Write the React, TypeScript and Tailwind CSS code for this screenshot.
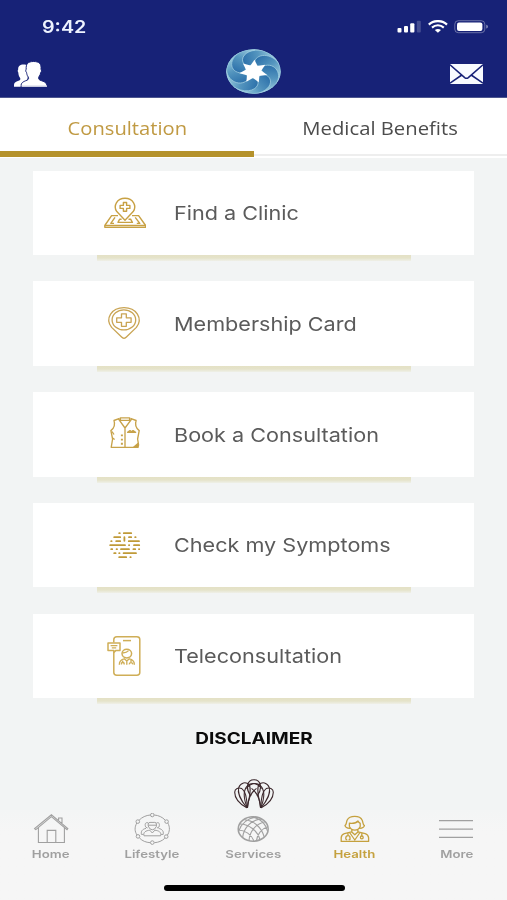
import { FC, ReactNode } from "react";

interface IconProps {
  className?: string;
}

const StatusIcons: FC = () => (
  <svg className="w-[92px] h-[14px]" viewBox="0 0 92 14" fill="none">
    <rect x="0.5" y="8" width="4" height="4.5" rx="1" fill="#fff" />
    <rect x="7" y="6" width="4" height="6.5" rx="1" fill="#fff" />
    <rect x="13.2" y="3.2" width="4.2" height="9.3" rx="1" fill="#fff" />
    <rect x="19.8" y="0.8" width="4" height="11.7" rx="1" fill="#fff" opacity="0.2" />
    <path d="M31.8 4.6C36.8 -.1 45 -.1 50 4.6" stroke="#fff" strokeWidth="2.2" />
    <path d="M35 7.6C38.4 4.5 43.4 4.5 46.8 7.6" stroke="#fff" strokeWidth="2.1" />
    <path d="M37.8 10C39.7 8.5 42.1 8.5 44 10L40.9 12.8Z" fill="#fff" />
    <rect x="57.8" y="0.7" width="30" height="12" rx="3.5" stroke="#fff" strokeOpacity="0.35" />
    <rect x="60" y="2.4" width="25.4" height="8.6" rx="2" fill="#fff" />
    <path d="M89.2 4.8c2.4.6 2.4 3.2 0 3.8z" fill="#fff" opacity="0.45" />
  </svg>
);

const PeopleIcon: FC = () => (
  <svg className="w-[33px] h-[26px]" viewBox="0 0 33 26" fill="#fff">
    <path d="M0 25C0 21.6 1.2 21.2 5.2 19.6C6.6 19 6.6 17.6 5.8 16.6C4.6 15 4.5 13 4.3 11.6C3.4 10.4 3.7 9.2 4.2 8.6C3.9 5 6.4 3.4 10 3.6C12.4 3.6 15 5 15 9L13 20L7 25Z" />
    <path
      d="M7 25.3C7.1 21.6 8.6 21 13 19.2C14.9 18.4 14.9 16.8 14 15.6C13 14.4 12.8 12.8 12.6 11.6C11.5 10.6 11.6 9 12.2 8.2C11.8 3 13.8.5 19.6.5C25.3.5 27.6 3 27 8.2C27.8 9.2 27.6 10.8 26.7 11.6C26.4 13 26 14.6 25 15.6C24.2 16.8 24.4 18.4 26.1 19.2C30.6 20.8 32.8 21.4 33 25.3Z"
      stroke="#172277"
      strokeWidth="1"
    />
    <path d="M0 24.4H6.6V25.7H0ZM7.6 24.4H33V25.7H7.6Z" />
  </svg>
);

const MailIcon: FC = () => (
  <svg className="w-[33px] h-5" viewBox="0 0 33 20">
    <rect width="33" height="20" rx="0.8" fill="#f8fbff" />
    <path d="M0 .8L14.7 13.6Q16.5 15 18.3 13.6L33 .8M0 19.2L11.8 11M33 19.2L21.2 11" fill="none" stroke="#172277" strokeWidth="1.6" />
  </svg>
);

const blades = [0, 1, 2, 3, 4, 5, 6];

const Logo: FC = () => (
  <svg className="w-[55px] h-[45px]" viewBox="-50 -50 100 100" preserveAspectRatio="none">
    <defs>
      <linearGradient id="blade" gradientUnits="userSpaceOnUse" x1="-22" y1="-22" x2="38" y2="-38">
        <stop offset="0" stopColor="#2c70aa" />
        <stop offset="0.5" stopColor="#5596bf" />
        <stop offset="1" stopColor="#a3d2e1" />
      </linearGradient>
      <clipPath id="disc">
        <circle r="49.5" />
      </clipPath>
    </defs>
    <g clipPath="url(#disc)">
      <circle r="49.5" fill="#5b9fc3" />
      {blades.map((i) => (
        <path
          key={i}
          transform={`rotate(${i * 51.43 + 4})`}
          d="M0 -18C0 -42 32 -45 47 -17L60 -40L16 -47.3C-15.2 -53.1 -32.8 -26.2 -14.1 -11.2Z"
          fill="url(#blade)"
        />
      ))}
      {blades.map((i) => (
        <path
          key={i}
          transform={`rotate(${i * 51.43 + 4})`}
          d="M0 -18C0 -42 32 -45 47 -17"
          fill="none"
          stroke="#a5d0e2"
          strokeWidth="1.4"
        />
      ))}
      <circle r="49" fill="none" stroke="#a5d0e2" strokeWidth="1.2" />
    </g>
    <circle r="14" fill="#fff" />
    {blades.map((i) => (
      <path key={i} transform={`rotate(${i * 51.43 + 4})`} d="M-7 -11.5L0 -26L7 -11.5Z" fill="#fff" />
    ))}
  </svg>
);

const ClinicIcon: FC = () => (
  <svg className="w-11 h-11" viewBox="0 0 44 44" fill="none" stroke="#c8a144" strokeWidth="1.4" strokeLinejoin="round">
    <path d="M23 29.2L14.8 20.6C10.8 14.8 15 7.3 23 7.3S35.2 14.8 31.2 20.6Z" />
    <path d="M21.4 11.5h3.2v2.9h3.3v3h-3.3v2.9h-3.2v-2.9h-3.3v-3h3.3z" />
    <path d="M16 24.6H9.6L2.8 34.5V36.3H43.6V34.5L36.6 24.6H30" />
    <path d="M3 34.4H43.4" />
    <path d="M13 26.3L8.8 32.4H12M33.2 26.3L37.8 32.4H34.8M19.6 28.2H17.6L16 31.4H30.4L28.6 28.2H26.5" />
  </svg>
);

const CardIcon: FC = () => (
  <svg className="w-11 h-11" viewBox="0 0 44 44" fill="none" stroke="#c9a453" strokeWidth="1.3" strokeLinejoin="round">
    <path d="M22 36.4Q20.6 36 19.6 35L9.6 25.4C2.6 16.2 9.8 5.6 22 5.6S41.4 16.2 34.4 25.4L24.4 35Q23.4 36 22 36.4Z" />
    <ellipse cx="21.9" cy="17.9" rx="11.8" ry="10" />
    <path d="M19.5 11.8h4.8v4h4.8v4.5h-4.8v4h-4.8v-4h-4.8v-4.5h4.8z" />
  </svg>
);

const VestIcon: FC = () => (
  <svg className="w-11 h-11" viewBox="0 0 44 44" fill="none" stroke="#c7a24a" strokeWidth="1.35" strokeLinejoin="round">
    <path d="M17.6 6.4L12 8.5C13.3 12.5 12.3 16 8.9 18.6L10.6 27L9.2 35.4H35.6L36.6 33L35.6 27L37.2 18.6C33.8 16 32.8 12.5 34.1 8.5L28.4 6.4" />
    <path d="M18.4 5.8H27.6V8.4H18.4ZM16.4 6.8L23 16L29.8 6.8M23 16V35.4" />
    <path d="M25.6 20.4H33.6L31 18.6L29.4 19.8L28 18.6ZM10 19.5L12 22.5M10.6 26L12.6 27.5" />
    <path d="M36 31.5L31.6 35.2H36Z" fill="#c39c3d" />
    <path d="M18.9 23.4h2M18.9 27.6h2M18.9 31.8h2" strokeWidth="1.9" />
  </svg>
);

const SymptomsIcon: FC = () => (
  <svg className="w-11 h-11" viewBox="0 0 44 44" fill="none" stroke="#c09a38" strokeWidth="1.8" strokeLinecap="round">
    <path d="M17.2 10.2H17.8M21.8 10.2H29.2" />
    <path d="M12.2 14.2H18.2M22.4 14.2V17.8M27 14.2H29.2M33.2 14.2H33.6" />
    <path d="M9.2 18.2H9.6M14.2 18.2H18.2M26.8 18.2H37" />
    <path d="M8.2 22.2H23M27 22.2H27.2M32 22.2H37.2" />
    <path d="M9.2 26.2H10.2M14.6 26.2H15M19 26.2H27M31.4 26.2H33.2M37 26.2H37.2" />
    <path d="M12.2 30.2H13.6M17.2 30.2H17.5M21.6 30.2H34" />
    <path d="M17.2 34.2H24.2M28.4 34.2H28.7" />
  </svg>
);

const TeleIcon: FC = () => (
  <svg className="w-11 h-11" viewBox="0 0 44 44" fill="none" stroke="#cfae57" strokeWidth="1.5" strokeLinejoin="round">
    <path d="M11.8 8.6V5.5Q11.8 2.8 14.8 2.8H34.8Q37.8 2.8 37.8 5.5V38.5Q37.8 41.2 34.8 41.2H14.8Q11.8 41.2 11.8 38.5V18" />
    <path d="M21 6.6H29" />
    <path d="M6 9.1H18V16.4H14L11.8 18.5V16.4H6Z" />
    <path d="M8.6 11.7H15.4M9.8 13.8H14.2" strokeWidth="1.2" />
    <ellipse cx="24.8" cy="19.6" rx="4.8" ry="4.3" />
    <path d="M20.6 19C23 18.8 25.4 18 26.6 16.6M17.3 30.8C17.3 26.8 18.8 25.4 22.3 24.8L24.8 27L27.3 24.8C30.8 25.4 32.4 26.8 32.4 30.8M20.6 26.4V27.8M19.4 30.6C19.4 27.4 22.2 27.4 22.2 30.6M29 25.8V28M27.4 30.4C27.2 28 30.8 28 30.6 30.4M24.8 27V30.8" strokeWidth="1.35" />
  </svg>
);

const ShellIcon: FC = () => (
  <svg className="w-10 h-[30px]" viewBox="0 0 40 30" fill="none" stroke="#3b272b" strokeWidth="1.1">
    {[false, true].map((flip) => (
      <g key={String(flip)} transform={flip ? "matrix(-1 0 0 1 40 0)" : undefined}>
        <path d="M12.8 28.8C5 24.5 .7 19 .7 13.2C.7 9.4 4.6 8.2 7.8 9.6C12.4 12.4 13 21 13.2 28.8" />
        <path d="M13 28.8C6.4 21 3.4 13 4.8 8.4C6.6 3.4 12 2.4 15 5.6C18.6 11 14 21 13.4 28.8" />
        <path d="M13.2 28.8C9.4 19 9.2 11 13.4 6.8C17.8 2.6 24.6 4.4 27.4 9.8" />
        <path d="M13.5 28.8C14 19 17 13.5 22.5 9.4" />
      </g>
    ))}
    <path d="M17 17C11 9.5 13 .7 20 .7S29 9.5 23 17" />
  </svg>
);

const HomeIcon: FC<IconProps> = ({ className }) => (
  <svg className={className} viewBox="0 0 36 32" fill="none" stroke="currentColor" strokeWidth="1.1">
    <path d="M2.4 16.4L1.6 15.6L18.4 1.8L34.8 15.6L34 16.6L18.4 3.6L2.8 16.6ZM5.4 14.8V29.5H31.4V14.8M14.2 29.5V17.4H22.8V29.5M25.6 7V5H29V10" />
  </svg>
);

const LifestyleIcon: FC<IconProps> = ({ className }) => (
  <svg className={className} viewBox="0 0 36 32" fill="none" stroke="currentColor" strokeWidth="1">
    <path d="M5.1 7.2C8 4.2 12 2.3 16.3 2M20.3 2C24.6 2.4 28.4 4.1 31 7M33.8 10C36.2 14 35.8 19 33.2 22.3M30.8 25.3C28 28 24.5 29.4 20.4 29.7M16.2 29.7C12 29.4 8.3 28 5.5 25M3 22C.6 18.4.4 14.4 2.8 10" />
    <circle cx="18.3" cy="2" r="1.8" />
    <circle cx="18.3" cy="29.6" r="1.8" />
    <circle cx="3.8" cy="8.6" r="1.8" />
    <circle cx="32.6" cy="8.6" r="1.8" />
    <circle cx="4" cy="23.4" r="1.8" />
    <circle cx="32.2" cy="23.6" r="1.8" />
    <path d="M14.2 13V11Q14.4 9.4 16 9.4H20.8Q22.4 9.6 22.4 11V13.4Q21 16.8 18.3 16.8T14.2 13ZM14.2 12.2H22.4M14 9.8C10.6 9 11 12 11.6 14L13.6 15M22.6 9.8C26 9 25.6 12 25 14L23 15M10 22.8C9 19 12 17.6 15.8 17.2L18.3 20L20.8 17.2C24.6 17.6 27.6 19 26.6 22.8ZM9.6 21.4H7.4C6.8 18 8.4 16.2 12 15.4M27 21.4H29.2C29.8 18 28.2 16.2 24.6 15.4" />
  </svg>
);

const GlobeIcon: FC<IconProps> = ({ className }) => (
  <svg className={className} viewBox="0 0 36 32" fill="none" stroke="currentColor" strokeWidth="1.1">
    <ellipse cx="18.2" cy="16" rx="15" ry="12.2" strokeWidth="1.5" />
    <path d="M7.6 24.6C8.5 16 15 7 26.5 5.9M14 27.8C14.4 19 20 11 30.2 8.8M21.4 27.8C22 21.5 26.5 15.5 33 13.8M3.6 18.4C6 11 12.5 5.5 21.2 4M9.6 6.8C18 7.4 26.4 13.6 29.2 24M5 11C14 11.2 22.4 17.5 25 26.6M3.4 17C10 17.2 16.6 21.4 19 28M16.4 3.9C24 5 30.4 10 32.6 18.4" />
  </svg>
);

const DoctorIcon: FC<IconProps> = ({ className }) => (
  <svg className={className} viewBox="0 0 36 32" fill="none" stroke="currentColor" strokeWidth="1.3" strokeLinejoin="round">
    <path d="M13.6 15.2C10.4 15.4 8.4 14.2 8 12.6C9.8 11.2 9.2 9 10.2 7C11.6 4.4 14.5 3.4 17.7 3.4S24 4.6 25.2 7.2C26.2 9.4 25.6 11.3 27.4 12.6C27 14.2 25 15.4 21.9 15.2" />
    <path d="M12.4 13.6V10.2C16 10.6 19.6 9.8 21 8C21.4 9.2 22.2 9.8 23.2 10.4V13.6C22.2 15.8 20.4 17.2 17.8 17.2S13.4 15.8 12.4 13.6M14.8 16.4V19L17.8 21.8L20.9 19V16.4" />
    <path d="M14.6 18.8L7.4 20.6Q4.4 21.5 4.2 24.6V28.4H31.6V24.6Q31.2 21.5 28.2 20.6L21 18.8M12.6 19.5L17.8 27L23 19.5M11 20.2V22.7M8.8 26.6V24.8Q9 22.7 11 22.7T13 24.8V26.6H11.6M8.8 26.6H10.2M24.8 20.4V23" />
    <circle cx="24.8" cy="24.4" r="1.4" />
  </svg>
);

const MoreIcon: FC<IconProps> = ({ className }) => (
  <svg className={className} viewBox="0 0 36 32" stroke="currentColor" strokeWidth="1.3">
    <path d="M1 7.7H35M1 16.1H35M1 24.4H35" />
  </svg>
);

interface Service {
  name: string;
  icon: ReactNode;
}

const services: Service[] = [
  { name: "Find a Clinic", icon: <ClinicIcon /> },
  { name: "Membership Card", icon: <CardIcon /> },
  { name: "Book a Consultation", icon: <VestIcon /> },
  { name: "Check my Symptoms", icon: <SymptomsIcon /> },
  { name: "Teleconsultation", icon: <TeleIcon /> },
];

const navItems: { name: string; Icon: FC<IconProps> }[] = [
  { name: "Home", Icon: HomeIcon },
  { name: "Lifestyle", Icon: LifestyleIcon },
  { name: "Services", Icon: GlobeIcon },
  { name: "Health", Icon: DoctorIcon },
  { name: "More", Icon: MoreIcon },
];

const App: FC = () => {
  return (
    <div className="w-[507px] h-[900px] flex flex-col overflow-hidden bg-[#f2f4f4] font-['Inter',sans-serif]">
      <header className="h-[98px] shrink-0 bg-[#172277] border-b border-[#4d568f]">
        <div className="h-12 pt-[5px] pl-[42px] pr-[18px] flex items-center justify-between">
          <span className="text-[17px] leading-5 font-semibold text-[#eef3ff] inline-block origin-left scale-x-[1.16]">9:42</span>
          <StatusIcons />
        </div>
        <div className="h-[50px] pl-3.5 pr-6 flex items-center justify-between">
          <button type="button" aria-label="Family" className="mt-0.5 w-[60px]"><PeopleIcon /></button>
          <div className="-mt-1 ml-2.5"><Logo /></div>
          <button type="button" aria-label="Messages" className="mt-0.5 w-[60px] flex justify-end"><MailIcon /></button>
        </div>
      </header>

      <div className="h-[60px] shrink-0 grid grid-cols-2 bg-white font-['Open_Sans',sans-serif] text-[18px]">
        <button type="button" className="mb-px flex items-center justify-center border-b-[6px] border-[#b5922b] pt-2 pl-px text-[#c09a43]">
          <span className="inline-block scale-x-[1.12]">Consultation</span>
        </button>
        <button type="button" className="mb-0.5 flex items-center justify-center border-b-2 border-[#eeeeee] pt-1 text-[#4c4c4c]">
          <span className="inline-block scale-x-[1.125]">Medical Benefits</span>
        </button>
      </div>

      <main className="flex-1 min-h-0 flex flex-col items-center pt-[12.5px]">
        {services.map((service) => (
          <div key={service.name} className="w-[441px] h-[110.75px] shrink-0">
            <button type="button" className="w-full h-[84.5px] pl-[69px] flex items-center gap-7 bg-white">
              {service.icon}
              <span className="pt-[3px] text-[19px] text-[#5b5b5b] whitespace-nowrap inline-block origin-left scale-x-[1.138]">{service.name}</span>
            </button>
            <div className="ml-16 w-[314px] h-1.5 bg-linear-to-b from-[#e4e1c5] via-[#e5e3ca] to-[#eff0e8] blur-[0.6px]" />
          </div>
        ))}
        <div className="h-5 mt-1 flex items-center text-[15.5px] font-bold text-[#0b0b0b]">
          <span className="inline-block scale-x-[1.225]">DISCLAIMER</span>
        </div>
        <div className="mt-[31px]"><ShellIcon /></div>
      </main>

      <nav className="h-[90px] shrink-0 flex flex-col items-center bg-linear-to-b from-[#f3f5f5] to-[#f6f6f6] to-25%">
        <div className="w-full grid grid-cols-5 pt-[3px]">
          {navItems.map(({ name, Icon }) => (
            <button
              key={name}
              type="button"
              className={`flex flex-col items-center ${name === "Health" ? "text-[#c5a13e]" : "text-[#a0a0a0]"}`}
            >
              <Icon className="w-9 h-8" />
              <span className="mt-0.5 text-[11px] leading-[14px] font-semibold inline-block scale-x-[1.2]">{name}</span>
            </button>
          ))}
        </div>
        <div className="mt-6 ml-0.5 w-[181px] h-[5.5px] rounded-full bg-black" />
      </nav>
    </div>
  );
};

export default App;
